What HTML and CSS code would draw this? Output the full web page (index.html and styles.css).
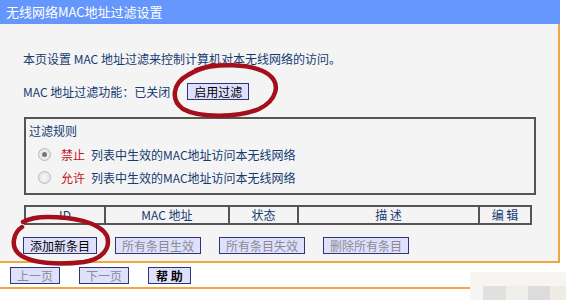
FILE: index.html
```html
<!DOCTYPE html>
<html lang="zh-CN">
<head>
  <meta charset="UTF-8">
  <title>无线网络MAC地址过滤设置</title>
  <link rel="stylesheet" href="styles.css">
</head>
<body>
  <div class="panel">
    <div class="title">无线网络MAC地址过滤设置</div>
    <div class="content">
      <p class="desc">本页设置 MAC 地址过滤来控制计算机对本无线网络的访问。</p>
      <div class="status-row">
        <span>MAC 地址过滤功能：已关闭</span>
        <button class="btn">启用过滤</button>
      </div>
      <div class="rules">
        <div class="rules-title">过滤规则</div>
        <div class="rule">
          <span class="radio checked"></span>
          <span class="red">禁止</span>
          <span>列表中生效的MAC地址访问本无线网络</span>
        </div>
        <div class="rule">
          <span class="radio"></span>
          <span class="red">允许</span>
          <span>列表中生效的MAC地址访问本无线网络</span>
        </div>
      </div>
      <table class="list">
        <tr>
          <th class="c-id">ID</th>
          <th class="c-mac">MAC 地址</th>
          <th class="c-state">状态</th>
          <th class="c-desc">描 述</th>
          <th class="c-edit">编 辑</th>
        </tr>
      </table>
      <div class="actions">
        <button class="btn">添加新条目</button>
        <button class="btn off">所有条目生效</button>
        <button class="btn off">所有条目失效</button>
        <button class="btn off">删除所有条目</button>
      </div>
    </div>
  </div>
  <div class="pager">
    <button class="btn off">上一页</button>
    <button class="btn off">下一页</button>
    <button class="btn help">帮 助</button>
  </div>
  <div class="pager-line"></div>

  <!-- hand-drawn marks over the screenshot -->
  <svg class="marks" width="566" height="300" viewBox="0 0 566 300">
    <path d="M196 70 C215 63 252 63 268 74 C282 84 276 101 259 109 C238 118 199 118 183 109 C170 100 173 83 188 75 C196 70 206 67 214 65"
      fill="none" stroke="#a3101c" stroke-width="4.5" stroke-linecap="round"/>
    <path d="M23 222 C30 218 40 217 48 217 C70 217 99 221 107 236 C111 249 102 259 84 262 C60 265 29 264 18 253 C11 246 13 233 22 227"
      fill="none" stroke="#a3101c" stroke-width="4.5" stroke-linecap="round"/>
  </svg>
  <div class="smudge">
    <span class="s1"></span><span class="s2"></span><span class="s3"></span><span class="s4"></span>
  </div>
</body>
</html>
```
FILE: styles.css
```css
body {
  margin: 0;
  background-color: #fff;
  font-family: "Noto Sans CJK SC", "Noto Sans", sans-serif;
  font-size: 12px;
  color: #143a72;
  width: 566px;
  height: 300px;
  position: relative;
  overflow: hidden;
}

.panel {
  width: 558px;
  height: 261px;
  background-color: #f4f4f4;
  border-right: 2px solid #f2a640;
  border-bottom: 2px solid #f2a640;
}

.title {
  height: 24px;
  line-height: 24px;
  padding-left: 6px;
  background-color: #6596fb;
  color: #fff;
  font-size: 13px;
  margin-right: -2px;
}

.content {
  padding: 27px 0 0 23px;
}

.desc {
  margin: 0;
  line-height: 16px;
}

.status-row {
  margin-top: 15px;
  height: 19px;
  display: flex;
  align-items: center;
  gap: 17px;
}

.btn {
  font-family: "Noto Sans CJK SC", sans-serif;
  font-size: 12px;
  height: 17px;
  line-height: 15px;
  padding: 0 6px;
  border: 1px solid #2f3478;
  background-color: #dfe0fb;
  color: #000;
  cursor: pointer;
}

.btn.off {
  color: #8a8a96;
}

.btn.help {
  font-weight: bold;
  padding: 0 7px;
}

.rules {
  margin: 16px 0 0 1px;
  width: 505px;
  height: 74px;
  border: 2px solid #555;
  padding-left: 3px;
}

.rules-title {
  margin-top: 4px;
  line-height: 16px;
}

.rule {
  display: flex;
  align-items: center;
  height: 16px;
  margin-top: 7px;
  padding-left: 9px;
}

.radio {
  width: 11px;
  height: 11px;
  border-radius: 50%;
  border: 1px solid #bbb;
  background: radial-gradient(circle, #f8f8f8 0, #dedede 100%);
  margin-right: 10px;
  position: relative;
}

.radio.checked::after {
  content: "";
  position: absolute;
  left: 3px;
  top: 3px;
  width: 5px;
  height: 5px;
  border-radius: 50%;
  background-color: #777;
}

.red {
  color: #c8101c;
  margin-right: 6px;
}

.list {
  margin: 10px 0 0 1px;
  border-collapse: collapse;
  width: 508px;
}

.list th {
  border: 2px solid #555;
  height: 16px;
  padding: 0;
  font-weight: normal;
  text-align: center;
  line-height: 16px;
}

.c-id { width: 78px; }
.c-mac { width: 122px; }
.c-state { width: 67px; }
.c-desc { width: 179px; }

.actions {
  margin-top: 12px;
  display: flex;
  gap: 18px;
}

.pager {
  margin: 4px 0 0 10px;
  display: flex;
  gap: 19px;
}

.pager-line {
  margin-top: 3px;
  width: 470px;
  height: 2px;
  background-color: #f2a640;
}

.marks {
  position: absolute;
  left: 0;
  top: 0;
  pointer-events: none;
}

.smudge {
  position: absolute;
  left: 470px;
  top: 272px;
  width: 96px;
  height: 28px;
  background-color: #f7f5f1;
}

.smudge span {
  position: absolute;
  top: 14px;
  height: 14px;
}

.s1 { left: 13px; width: 23px; background-color: #e2e0de; }
.s2 { left: 36px; width: 22px; background-color: #f1efea; }
.s3 { left: 58px; width: 22px; background-color: #dedcda; }
.s4 { left: 80px; width: 16px; background-color: #efece6; }
```
